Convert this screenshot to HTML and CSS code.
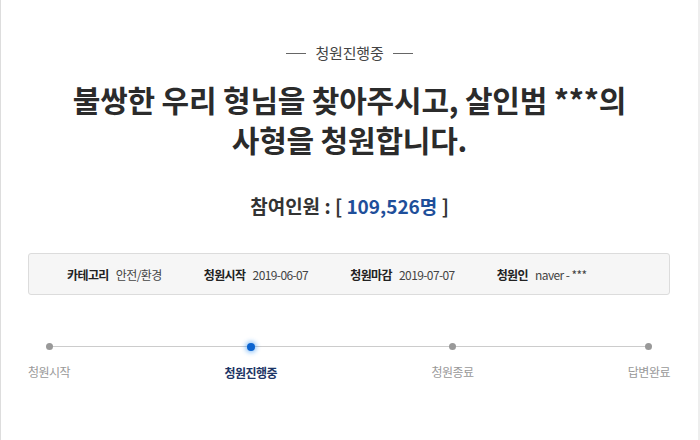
FILE: index.html
```html
<html>
    <head>
        <meta charset="UTF-8">
        <meta name="viewport" content="width=device-width, initial-scale=1.0">

        <title>청원진행중</title>

        <link rel="stylesheet" href="styles.css">
    </head>

    <body>
        <div class="page">
            <p class="status">청원진행중</p>

            <h1 class="title">불쌍한 우리 형님을 찾아주시고, 살인범 ***의<br>사형을 청원합니다.</h1>

            <p class="count">참여인원 : [ <span>109,526명</span> ]</p>

            <ul class="info">
                <li><b>카테고리</b> 안전/환경</li>
                <li><b>청원시작</b> 2019-06-07</li>
                <li><b>청원마감</b> 2019-07-07</li>
                <li><b>청원인</b> naver - ***</li>
            </ul>

            <div class="steps">
                <div class="step"><i></i><span>청원시작</span></div>
                <div class="step on"><i></i><span>청원진행중</span></div>
                <div class="step"><i></i><span>청원종료</span></div>
                <div class="step"><i></i><span>답변완료</span></div>
            </div>
        </div>
    </body>
</html>
```

FILE: styles.css
```css
body{
    margin: 0;
    background-color: #fff;
    font-family: "Noto Sans CJK KR", "Noto Sans", sans-serif;
    color: #333;
}
.page{
    width: 700px;
    height: 440px;
    border-left: 1px solid #ddd;
    border-right: 2px solid #eee;
    padding-top: 42px;
    box-sizing: border-box;
}
.status{
    margin: 0;
    display: flex;
    justify-content: center;
    align-items: center;
    gap: 9px;
    font-size: 15px;
    line-height: 22px;
    color: #444;
    letter-spacing: -0.2px;
}
.status::before,
.status::after{
    content: "";
    width: 20px;
    border-top: 1px solid #666;
}
.title{
    margin: 15px 0 0;
    text-align: center;
    font-size: 30px;
    line-height: 40px;
    font-weight: bold;
    color: #2b2b2b;
    letter-spacing: -0.2px;
}
.count{
    margin: 33px 0 0;
    text-align: center;
    font-size: 19px;
    line-height: 28px;
    font-weight: bold;
    color: #333;
}
.count span{
    color: #1f4f9a;
}
.info{
    list-style: none;
    margin: 33px 28px 0 27px;
    height: 42px;
    padding: 0 0 0 38px;
    box-sizing: border-box;
    display: flex;
    align-items: center;
    gap: 42px;
    background-color: #f6f6f6;
    border: 1px solid #dcdcdc;
    border-radius: 3px;
    font-size: 12px;
    letter-spacing: -0.6px;
    color: #444;
}
.info b{
    color: #222;
    margin-right: 5px;
}
.steps{
    position: relative;
    margin: 48px 28px 0 27px;
    display: flex;
    justify-content: space-between;
}
.steps::before{
    content: "";
    position: absolute;
    left: 20px;
    right: 21px;
    top: 3px;
    border-top: 1px solid #ccc;
}
.step{
    position: relative;
    display: flex;
    flex-direction: column;
    align-items: center;
    gap: 13px;
}
.step i{
    width: 7px;
    height: 7px;
    border-radius: 50%;
    background-color: #999;
}
.step span{
    font-size: 12px;
    line-height: 18px;
    color: #999;
    letter-spacing: -0.5px;
}
.step.on i{
    width: 8px;
    height: 8px;
    background-color: #0b64d0;
    box-shadow: 0 0 4px 2px rgba(40, 140, 240, 0.45);
}
.step.on span{
    color: #1c3566;
    font-weight: bold;
}
```
